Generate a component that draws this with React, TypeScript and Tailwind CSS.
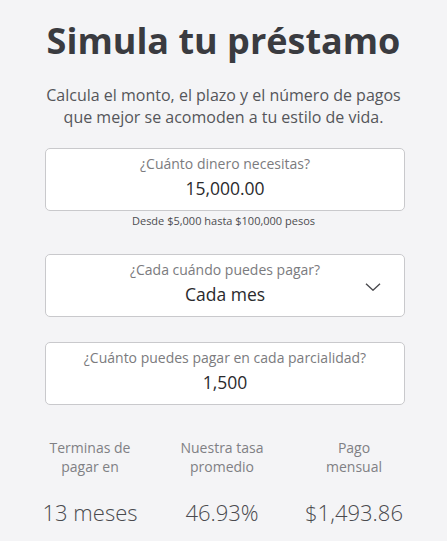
import React from "react";

function Field({ label, value, chevron }: { label: string; value: string; chevron?: boolean }) {
  return (
    <div className="relative w-[360px] ml-[45px] bg-white border border-[#c9c9cc] rounded-[5px] pt-[5px] pb-[10px] text-center">
      <div className="text-[14px] leading-[20px] text-[#7b7b7e]">{label}</div>
      <div className="mt-[2px] text-[17.5px] leading-[24px] text-[#2a2a2d]">{value}</div>
      {chevron && (
        <svg
          className="absolute left-[319px] top-[28px]"
          width="16"
          height="8"
          viewBox="0 0 16 8"
          fill="none"
        >
          <path d="M1 0.8L8 7.2L15 0.8" stroke="#4a4a4e" strokeWidth="1.4" />
        </svg>
      )}
    </div>
  );
}

export default function App() {
  return (
    <div
      className="w-[447px] h-[541px] bg-[#f4f4f6] overflow-hidden"
      style={{ fontFamily: '"Open Sans", sans-serif' }}
    >
      <h1 className="pt-[20px] text-center text-[36px] leading-[42px] font-bold text-[#3a3b40]">
        Simula tu préstamo
      </h1>
      <p className="mt-[22px] text-center text-[16px] leading-[22px] text-[#55565a]">
        Calcula el monto, el plazo y el número de pagos
        <br />
        que mejor se acomoden a tu estilo de vida.
      </p>
      <div className="mt-[20px]">
        <Field label="¿Cuánto dinero necesitas?" value="15,000.00" />
      </div>
      <div className="mt-[2px] text-center text-[11px] leading-[16px] text-[#4d4d50]">
        Desde $5,000 hasta $100,000 pesos
      </div>
      <div className="mt-[25px]">
        <Field label="¿Cada cuándo puedes pagar?" value="Cada mes" chevron />
      </div>
      <div className="mt-[25px]">
        <Field label="¿Cuánto puedes pagar en cada parcialidad?" value="1,500" />
      </div>
      <div className="ml-[24px] w-[396px] mt-[33px] grid grid-cols-3 text-center">
        {[
          ["Terminas de", "pagar en", "13 meses"],
          ["Nuestra tasa", "promedio", "46.93%"],
          ["Pago", "mensual", "$1,493.86"],
        ].map(([a, b, v]) => (
          <div key={v}>
            <div className="text-[14px] leading-[19px] text-[#808084]">
              {a}
              <br />
              {b}
            </div>
            <div className="mt-[22px] text-[22px] leading-[28px] font-light text-[#4a4a4e]">{v}</div>
          </div>
        ))}
      </div>
    </div>
  );
}
